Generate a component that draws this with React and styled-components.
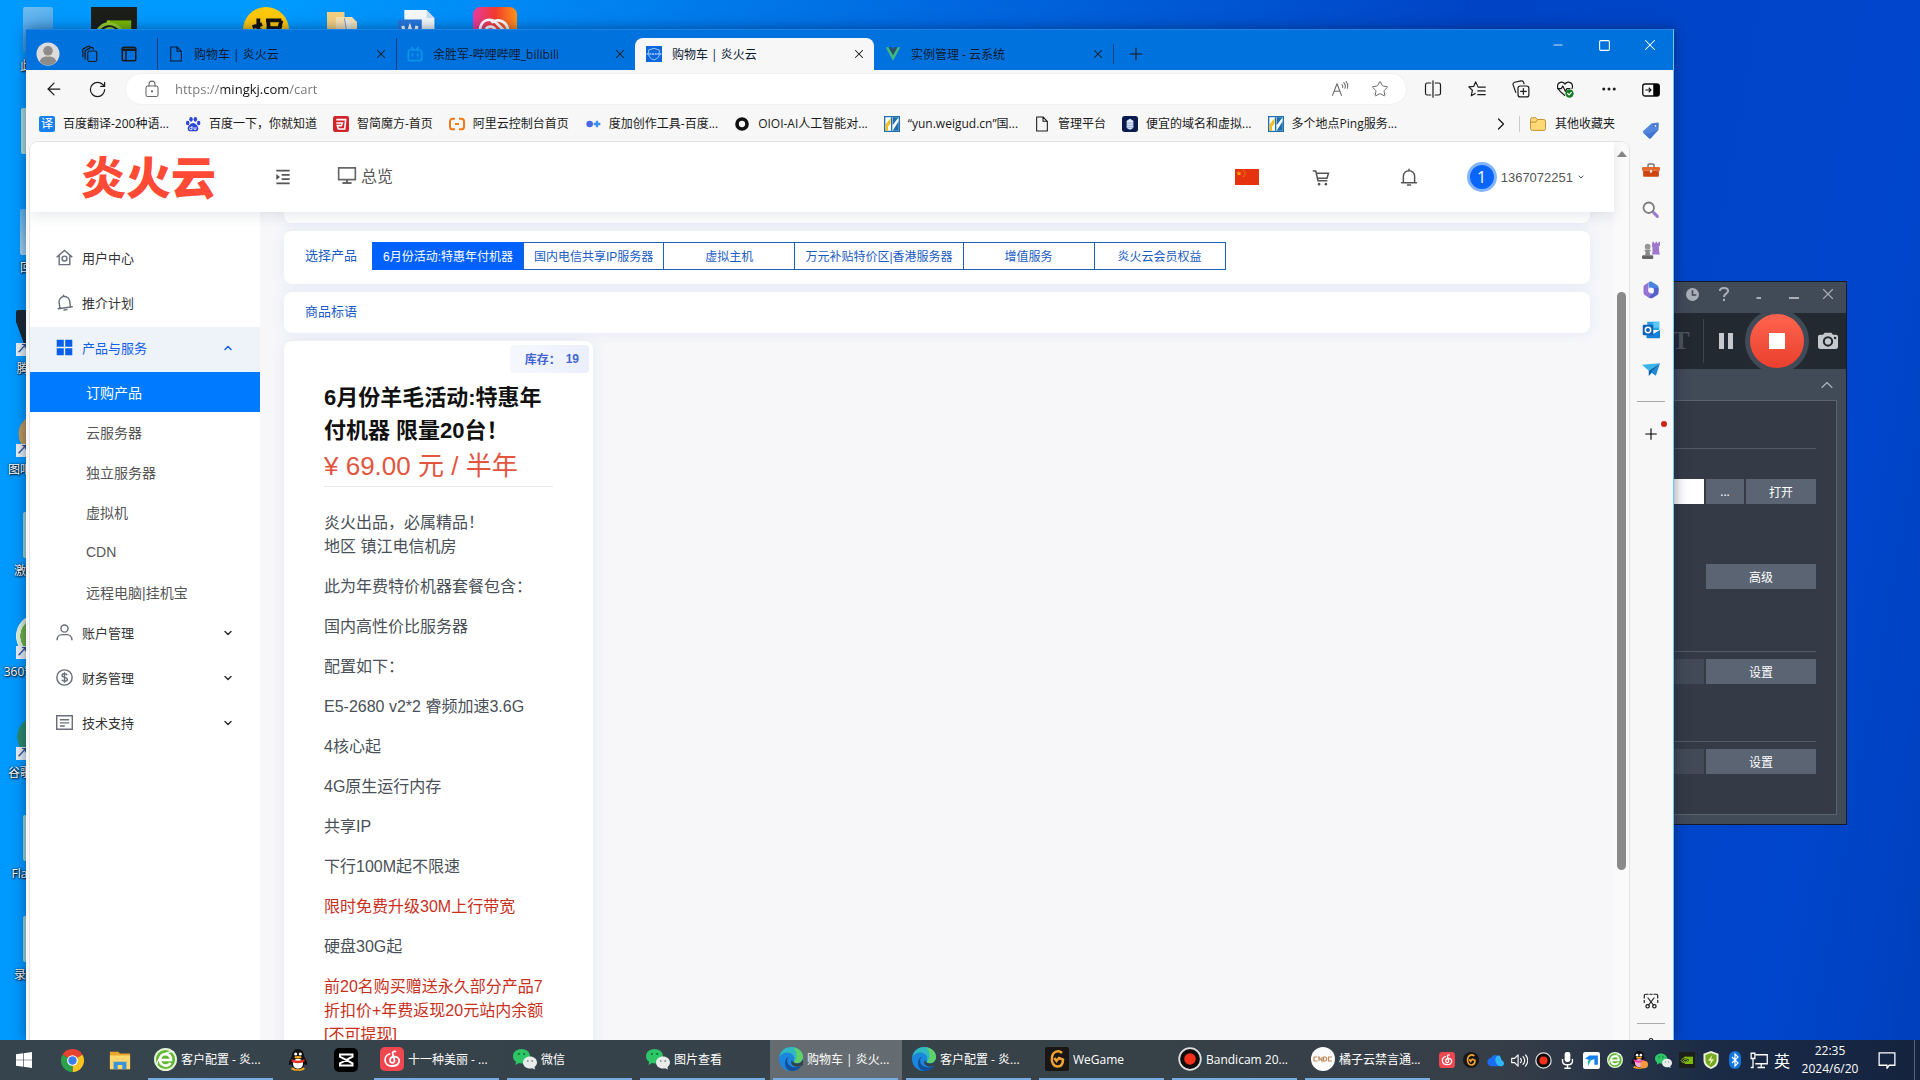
import React from "react";
import styled, { createGlobalStyle, css } from "styled-components";
import {
  ArrowLeft,
  RotateCw,
  Star,
  X,
  Plus,
  Minus,
  Square,
  Ellipsis,
  ChevronRight,
  ChevronUp,
  ChevronDown,
  Settings,
} from "lucide-react";

const uiFont = `"Open Sans", "Noto Sans CJK SC", sans-serif`;
const pageFont = `"Liberation Sans", "Noto Sans CJK SC", sans-serif`;

const GlobalStyle = createGlobalStyle`
  * {
    box-sizing: border-box;
  }
  body {
    margin: 0;
    font-family: ${uiFont};
    font-size: 12px;
  }
  button, input {
    font-family: inherit;
    font-size: inherit;
    color: inherit;
    border: 0;
    padding: 0;
    margin: 0;
    background: none;
  }
  button {
    cursor: pointer;
    display: inline-flex;
    align-items: center;
    justify-content: center;
  }
  a {
    color: inherit;
    text-decoration: none;
  }
  svg {
    display: block;
    flex: none;
  }
`;

/* ---------- icons ---------- */

const Svg = ({ size = 16, box = 24, children, ...rest }) => (
  <svg
    width={size}
    height={size}
    viewBox={`0 0 ${box} ${box}`}
    fill="none"
    aria-hidden="true"
    {...rest}
  >
    {children}
  </svg>
);

const Line = ({ width = 1.6, children, ...rest }) => (
  <Svg
    stroke="currentColor"
    strokeWidth={width}
    strokeLinecap="round"
    strokeLinejoin="round"
    {...rest}
  >
    {children}
  </Svg>
);

const DocIcon = () => (
  <Line size={16} width={1.6}>
    <path d="M4 1.500h9.500L20 8v14.500H4zM13.500 1.500V8H20" />
  </Line>
);

const ProfileIcon = () => (
  <Svg size={24}>
    <circle cx="12" cy="12" r="11.500" fill="#dcdcdc" />
    <circle cx="12" cy="8.800" r="4.800" fill="#8e8c8a" />
    <path d="M4 20c0-4 3-5.500 8-5.500s8 1.500 8 5.500a11.500 11.500 0 0 1-16 0z" fill="#8e8c8a" />
  </Svg>
);

const WorkspacesIcon = () => (
  <Line size={18}>
    <rect x="9" y="8" width="12" height="14" rx="2.500" />
    <path d="M5.500 18.500V7.500L13 3.500c2-1 3.500 0 3.500 2" />
    <path d="M2.500 15.500V5.500L9 2c1.500-.8 3 0 3 1" />
  </Line>
);

const TabActionsIcon = () => (
  <Line size={18} width={2}>
    <rect x="3" y="3" width="18" height="18" rx="2.500" />
    <path d="M3 5.500h18M3 7h18" />
    <path d="M8 7v14" />
  </Line>
);

const BiliIcon = () => (
  <Line size={16} width={2.6} stroke="#0a94ea">
    <rect x="2" y="6" width="20" height="16" rx="3" />
    <path d="M7 2l2.500 3.500M17 2l-2.500 3.500M8 12v3M16 12v3" />
  </Line>
);

const ShieldTabIcon = () => (
  <Svg>
    <path d="M0 0h24v24H0z" fill="#0d66dc" />
    <path d="M12 3.500l8 2.500v6c0 4.500-3 7-8 9-5-2-8-4.500-8-9V6z" stroke="#9cc8ff" strokeWidth="1.500" />
    <path d="M1 12h22" stroke="#7eb6ff" strokeWidth="3" strokeDasharray="3 1" />
  </Svg>
);

const VueIcon = () => (
  <Svg>
    <path d="M1 2h4.500L12 13.500 18.500 2H23L12 22z" fill="#3fb883" />
    <path d="M5.500 2H10l2 3.500L14 2h4.500L12 13.500z" fill="#2f4a5f" />
  </Svg>
);

const LockIcon = () => (
  <Line size={18} width={1.4}>
    <rect x="4" y="8" width="16" height="14" rx="2.500" />
    <path d="M8 8V5.500a4 4 0 0 1 8 0V8" />
    <circle cx="12" cy="15" r=".8" fill="currentColor" />
  </Line>
);

const ReadAloudIcon = () => (
  <Line size={18} width={1.4}>
    <path d="M2 20.500L8 5l6 15.500M4.200 15h7.600M14.500 6c1 1 1.500 2.500 1 4M17 3.500c2 2 2.500 5 1.500 7.500M20 2c2.200 2.500 2.800 6 1.800 9" />
  </Line>
);

const SplitIcon = () => (
  <Line size={18}>
    <path d="M9 4H4.500C3 4 2 5 2 6.500v11C2 19 3 20 4.500 20H9M15 4h4.500C21 4 22 5 22 6.500v11c0 1.500-1 2.500-2.500 2.500H15M12 1v22" />
  </Line>
);

const FavoritesIcon = () => (
  <Line size={18}>
    <path d="M13.500 9.500L10.300 2.500 7.500 8.600 1 9.200l4.800 4.500L4.400 21l5.200-3M14.500 9.500H23M13 14.500h10M13 19.500h10" />
  </Line>
);

const CollectionsIcon = () => (
  <Line size={18}>
    <rect x="8" y="8" width="14.500" height="14.500" rx="3" />
    <path d="M15.200 11.500v7.500M11.500 15.200h7.500M5 16.500L1.500 6.500C1 4.500 2 3.500 3.500 3L12 1.200c1.800-.4 3 .3 3.500 2L16 5" />
  </Line>
);

const HealthIcon = () => (
  <Line size={18}>
    <path d="M12 5.500C9.500 1.500 2 2 2 8.500c0 4.500 5 8 9.500 12M12 5.500c2.500-4 10-3.500 10 3 0 1-.3 2-.7 3M2 11.500h5l2-3.500 3.500 7 2-3.500h4" />
    <circle cx="18" cy="18" r="5.500" fill="#137a22" stroke="none" />
    <path d="M15.500 18l2 1.800 3-3.300" stroke="#fff" />
  </Line>
);

const PanelIcon = () => (
  <Svg size={18}>
    <rect x="1" y="4" width="22" height="16" rx="3" stroke="#111" strokeWidth="1.800" />
    <path d="M15 4h5a3 3 0 0 1 3 3v10a3 3 0 0 1-3 3h-5z" fill="#000" />
    <path d="M4.500 12h7M9 9l3 3-3 3" stroke="#111" strokeWidth="1.500" />
  </Svg>
);

const TranslateIcon = styled.span`
  display: flex;
  align-items: center;
  justify-content: center;
  width: 16px;
  height: 16px;
  border-radius: 2px;
  background: #1680ef;
  color: #fff;
  font-size: 12px;
  line-height: 16px;
`;

const PawIcon = () => (
  <Svg>
    <g fill="#2845d8">
      <ellipse cx="4" cy="10.500" rx="2.600" ry="3.400" />
      <ellipse cx="9" cy="5" rx="2.600" ry="3.500" />
      <ellipse cx="15.500" cy="5" rx="2.600" ry="3.500" />
      <ellipse cx="20.500" cy="10.500" rx="2.600" ry="3.400" />
      <path d="M12 10.500c3.500 0 8 5 8 8.500 0 2.500-2 4-4 4H8c-2 0-4-1.500-4-4 0-3.500 4.500-8.500 8-8.500z" />
    </g>
    <path d="M10.500 15v5.500H8.500a1.500 1.500 0 0 1 0-3.500h2M13.500 16.500V20h3v-3.500" stroke="#fff" strokeWidth="1.300" />
  </Svg>
);

const CubeIcon = () => (
  <Svg>
    <rect width="24" height="24" rx="3" fill="#d3232b" />
    <path d="M5 5.500h14L17.500 19.500H8M5 10.500h9L12.500 14.500H6.500L8 19.500" stroke="#fff" strokeWidth="2.400" />
  </Svg>
);

const AliyunIcon = () => (
  <Svg>
    <path d="M9 4H5.500A4 4 0 0 0 1.500 8v8a4 4 0 0 0 4 4H9M15 4h3.500a4 4 0 0 1 4 4v8a4 4 0 0 1-4 4H15M9 12h6" stroke="#f47a16" strokeWidth="3" />
  </Svg>
);

const DujiaIcon = () => (
  <Svg>
    <circle cx="7" cy="12" r="5" fill="#4868e6" />
    <path d="M18 7v10M13 12h10" stroke="#3f8ef2" strokeWidth="3.500" />
  </Svg>
);

const RingIcon = () => (
  <Svg>
    <circle cx="12" cy="12" r="7.500" stroke="#111" strokeWidth="5.500" />
  </Svg>
);

const PingIcon = () => (
  <Svg>
    <path d="M1 1h22v22H1z" fill="#fff" stroke="#1e6fae" strokeWidth="2" />
    <path d="M2 13L10 3v8l-4 5v6H2z" fill="#eebd28" />
    <path d="M13 14V2h9zM22 8v14h-9z" fill="#1e6fae" />
    <path d="M11.500 2v20" stroke="#1e6fae" strokeWidth="2" />
  </Svg>
);

const ServerIcon = () => (
  <Svg>
    <rect width="24" height="24" rx="4" fill="#0a1b50" />
    <path d="M7 7l5-3 5 3v11l-5 2.500L7 18z" fill="#dce8fa" />
    <path d="M7 10.500h10M7 14h10M7 17h10" stroke="#7d90be" />
  </Svg>
);

const FolderIcon = () => (
  <Svg size={18}>
    <path d="M2 6a2.500 2.500 0 0 1 2.500-2.500H9l2.500 2.500h8A2.500 2.500 0 0 1 22 8.500V18a2.500 2.500 0 0 1-2.500 2.500h-15A2.500 2.500 0 0 1 2 18z" fill="#ffd877" stroke="#b98a22" strokeWidth="1.200" />
    <path d="M2 9.500h7L11.500 6" stroke="#b98a22" strokeWidth="1.200" />
  </Svg>
);

const TagIcon = () => (
  <Svg size={18}>
    <path d="M13 3l8-1a1.500 1.500 0 0 1 1.500 1.500l-.5 8L12 22.500a2 2 0 0 1-3 0L2 16a2 2 0 0 1 0-3z" fill="#5286dd" />
    <path d="M2 16l7 6.500a2 2 0 0 0 3 0L22 11.500 9 17z" fill="#4474d0" />
    <circle cx="18" cy="6.500" r="2" fill="#dfeaff" stroke="#2c4f9c" />
  </Svg>
);

const ToolboxIcon = () => (
  <Svg size={18}>
    <path d="M8 8V5.500A1.500 1.500 0 0 1 9.500 4h5A1.500 1.500 0 0 1 16 5.500V8" stroke="#777" strokeWidth="2" />
    <path d="M0 9.500A1.500 1.500 0 0 1 1.500 8h21A1.500 1.500 0 0 1 24 9.500V13H0z" fill="#e3672f" />
    <path d="M1.500 13h21v6.500A1.500 1.500 0 0 1 21 21H3a1.500 1.500 0 0 1-1.500-1.500z" fill="#cc4412" />
    <rect x="10.500" y="11.500" width="3" height="4" rx="1" fill="#ffe0cf" />
  </Svg>
);

const SearchIcon = () => (
  <Svg size={18}>
    <path d="M15.500 15.500l5 5" stroke="#9a79cf" strokeWidth="4" strokeLinecap="round" />
    <circle cx="9" cy="9" r="7" stroke="#7d7d7d" strokeWidth="2.400" fill="#fafafa" />
  </Svg>
);

const ChessIcon = () => (
  <Svg size={18}>
    <path d="M14 1h2v2h2V1h2v2h2V1h2v5l-1.500 1 .5 8 1 3H13l1-3V8l-1-1z" fill="#9c78cc" />
    <circle cx="7.500" cy="7.500" r="3.800" fill="#979797" />
    <path d="M3.500 11.500h8v2l-1.500.5 1 5H4l1-5-1.500-.5z" fill="#8a8a8a" />
    <rect x="0" y="19" width="15" height="5" rx="1.500" fill="#666" />
  </Svg>
);

const OfficeIcon = () => (
  <Svg size={18}>
    <path d="M9 1.500c1.500-1 3-1 4.500-.2l6.500 4c1.500 1 2 2 2 3.700v5L15 9.500 9 8.500z" fill="#4a86e0" />
    <path d="M22 9v6.500c0 1.500-.8 2.700-2 3.500l-6 3.500c-1.500.8-3 .8-4.500-.2L7 20.500l8.500-5V9.500z" fill="#5361cc" />
    <path d="M9 1.500L4 5C2.500 6 2 7 2 8.500V15c0 2 .8 3 2 4l5.500 3.300 4-6.800-5-2.500V6z" fill="#9373d6" />
    <path d="M12 8.500l3.500 2v4L12 16.500l-3.500-2v-4z" fill="#f7f7f7" />
  </Svg>
);

const OutlookIcon = () => (
  <Svg size={18}>
    <path d="M7 1h16v11H7z" fill="#2aa3e8" />
    <path d="M15 1h8v8h-8z" fill="#58c8f5" />
    <path d="M6 12l9.500 5L24 12v10a1 1 0 0 1-1 1H7a1 1 0 0 1-1-1z" fill="#1580d8" />
    <rect x="1" y="5" width="14" height="14" rx="1.500" fill="#0b62b5" />
    <circle cx="8" cy="12" r="3.600" stroke="#fff" strokeWidth="2" />
  </Svg>
);

const PlaneIcon = () => (
  <Svg size={18}>
    <path d="M0 5l24-2L9 13z" fill="#38b4ec" />
    <path d="M24 3L9 13v7l4-4.500z" fill="#0d5ea8" />
    <path d="M24 3L18.500 19.500 11.500 15z" fill="#1f8ad8" />
  </Svg>
);

const ShotIcon = () => (
  <Line size={18}>
    <path d="M3 8V5a2 2 0 0 1 2-2h3M10.500 3h3M16 3h3a2 2 0 0 1 2 2v3M3 11v3M21 11v3M8 8l7 9M16 8l-7 9" />
    <circle cx="7.500" cy="19" r="2.300" />
    <circle cx="16.500" cy="19" r="2.300" />
  </Line>
);

const MenuFoldIcon = () => (
  <Svg size={16}>
    <path d="M2 2.500h20M10 8.800h12M10 15.200h12M2 21.500h20" stroke="#555" strokeWidth="2.800" />
    <path d="M2 7.500v9l5.500-4.500z" fill="#555" />
  </Svg>
);

const MonitorIcon = () => (
  <Svg size={20}>
    <path d="M2 3.500h20v14H2z" stroke="#666" strokeWidth="2" />
    <path d="M12 17.500V21M6.500 21.500h11" stroke="#666" strokeWidth="2.400" />
  </Svg>
);

const FlagIcon = () => (
  <svg width="24" height="16" viewBox="0 0 24 16" aria-hidden="true">
    <path d="M0 0h24v16H0z" fill="#e5320f" />
    <path d="M4 2l.7 1.600 1.800.1-1.400 1.200.5 1.700L4 5.700 2.400 6.600l.5-1.700L1.500 3.700l1.800-.1z" fill="#fca712" />
    <g fill="#f58a14">
      <circle cx="8.500" cy="1.800" r=".7" />
      <circle cx="10" cy="3.500" r=".7" />
      <circle cx="10" cy="5.700" r=".7" />
      <circle cx="8.500" cy="7.200" r=".7" />
    </g>
  </svg>
);

const CartIcon = () => (
  <Svg size={18}>
    <path d="M1 4h4l3 13h12.500M5.500 7H22l-2 6.500H7.300" stroke="#555" strokeWidth="2" />
    <circle cx="9.500" cy="21.500" r="1.700" fill="#555" />
    <circle cx="18.500" cy="21.500" r="1.700" fill="#555" />
  </Svg>
);

const BellIcon = ({ tilt, size = 18 }) => (
  <Svg size={size} stroke="currentColor" strokeWidth="2">
    <g transform={tilt ? "rotate(-8 12 12)" : undefined}>
      <path d="M2 19.500h20M4.500 19V11a7.500 7.500 0 0 1 15 0v8M12 1.500v2M10 22.500h4" strokeLinecap="round" />
    </g>
  </Svg>
);

const HomeIcon = () => (
  <Svg size={17} stroke="currentColor" strokeWidth="2">
    <path d="M1 11.500L12 2l11 9.500M4.500 9v13h15V9" />
    <circle cx="12" cy="13.500" r="3.500" />
  </Svg>
);

const GridIcon = () => (
  <Svg size={17}>
    <path d="M1 1h10v10H1zM13 1h10v10H13zM1 13h10v10H1zM13 13h10v10H13z" fill="currentColor" />
  </Svg>
);

const UserIcon = () => (
  <Svg size={17} stroke="currentColor" strokeWidth="2">
    <circle cx="12" cy="6.500" r="5" />
    <path d="M1.500 23c0-5.500 3.500-8 7-8h7c3.500 0 7 2.500 7 8" />
  </Svg>
);

const MoneyIcon = () => (
  <Svg size={17} stroke="currentColor" strokeWidth="2">
    <circle cx="12" cy="12" r="10.800" />
    <path d="M16 8.500c-1-1.500-2.500-1.700-4-1.700-2 0-3.500.8-3.500 2.500 0 3.500 7.500 1.800 7.500 5.200 0 1.800-1.700 2.700-4 2.700-1.700 0-3.200-.5-4-2M12 4.500v15" />
  </Svg>
);

const NewsIcon = () => (
  <Svg size={17} stroke="currentColor" strokeWidth="2">
    <path d="M1 2.500h22v19H1z" />
    <path d="M5.500 8h13M5.500 12.500h13M5.500 17h7" />
  </Svg>
);

/* ---------- app logos ---------- */

const WindowsLogo = () => (
  <Svg size={16}>
    <path d="M0 3.500l10.500-1.500v9.500H0zM11.500 1.800L24 0v11.500H11.500zM0 12.500h10.500V22L0 20.500zM11.500 12.500H24V24l-12.500-1.800z" fill="#fff" />
  </Svg>
);

const ChromeLogo = ({ size = 23 }) => (
  <Svg size={size}>
    <path d="M12 12L1.600 6A12 12 0 0 1 22.400 6z" fill="#e5432f" />
    <path d="M12 12l10.400-6A12 12 0 0 1 12 24z" fill="#f9c31f" />
    <path d="M12 12v12A12 12 0 0 1 1.600 6z" fill="#2da04c" />
    <circle cx="12" cy="12" r="5.600" fill="#fff" />
    <circle cx="12" cy="12" r="4.400" fill="#3b7ded" />
  </Svg>
);

const ExplorerLogo = () => (
  <Svg size={22}>
    <path d="M1 3h9l2 2h11v17H1z" fill="#e9a62a" />
    <path d="M1 7h22v15H1z" fill="#fcd66f" />
    <path d="M5 22v-8h14v8h-4.500v-4.500h-5V22z" fill="#3b93d8" />
  </Svg>
);

const Browser360Logo = ({ size = 23 }) => (
  <Svg size={size}>
    <circle cx="12" cy="12" r="11" fill="#62b834" stroke="#e6f5d8" strokeWidth="2" />
    <path d="M6.500 12.500h11.200c0-4-2.400-6.200-5.700-6.200s-5.800 2.500-5.800 6 2.500 6 5.800 6c2.500 0 4.200-1 5.200-2.800" stroke="#fff" strokeWidth="2.800" />
    <path d="M3 17C4 10 12 3 21 4" stroke="#fff" strokeWidth="1.300" />
  </Svg>
);

const QQLogo = ({ pink, size = 22 }) => (
  <Svg size={size}>
    <ellipse cx="12" cy="21.500" rx="7.500" ry="2.300" fill="#f5a51b" />
    <path d="M12 0c4.500 0 6.500 3.500 6.500 7.500 1.500 3 3.500 6 3.500 8.500s-1.500 1.500-2.500 0C18.500 20 15.500 22 12 22s-6.500-2-7.500-6c-1 1.500-2.500 2.500-2.500 0s2-5.500 3.500-8.500C5.500 3.500 7.500 0 12 0z" fill="#111" />
    <ellipse cx="12" cy="16" rx="5.500" ry="5.500" fill={pink ? "#f7a8d8" : "#fff"} />
    <path d="M5 11c4 2.500 10 2.500 14 0v3c-4 2-10 2-14 0z" fill={pink ? "#e83aa6" : "#e02a20"} />
    <circle cx="9.500" cy="5.500" r="1.700" fill="#fff" />
    <circle cx="14.500" cy="5.500" r="1.700" fill="#fff" />
    <ellipse cx="12" cy="9" rx="4" ry="1.300" fill="#f5a51b" />
    {pink && <circle cx="19" cy="18" r="5" fill="#f79a3d" />}
  </Svg>
);

const CapcutLogo = () => (
  <Svg size={24}>
    <rect width="24" height="24" rx="5" fill="#000" />
    <path d="M18.500 8.500V6.500H6v2.200l12.500 6.600v2.200H6v-2.200l12.500-6.600z" stroke="#fff" strokeWidth="2" />
  </Svg>
);

const NeteaseLogo = ({ size = 24 }) => (
  <Svg size={size}>
    <rect width="24" height="24" rx="5" fill="#ee4750" />
    <path d="M15.500 4.500c-2-.5-3.200.8-2.800 2.500l1.800 6.500c.5 3-4.500 3.200-4.500 0 0-2.500 2-3.800 4.500-3.800 7 .3 6 9.300-2.500 9.300-8.500 0-9-10-2.500-12" stroke="#fff" strokeWidth="1.800" strokeLinecap="round" />
  </Svg>
);

const WechatLogo = ({ size = 24 }) => (
  <Svg size={size}>
    <path d="M8.500 2C4 2 0 5 0 9.200c0 2.300 1.200 4.200 3 5.500L2.500 18l3.500-2c5 1.500 11-1.500 11-6.800C17 5 13 2 8.500 2z" fill="#2dc566" />
    <circle cx="5.800" cy="7" r="1" fill="#0c6b31" />
    <circle cx="11.200" cy="7" r="1" fill="#0c6b31" />
    <path d="M17 9.500c-4 0-7 2.600-7 6s3 6 7 6c.8 0 1.500-.1 2.200-.3L22 22.500l-.5-2.500c1.600-1.100 2.500-2.700 2.500-4.500 0-3.400-3-6-7-6z" fill="#e8ecea" />
    <circle cx="14.800" cy="14" r=".9" fill="#88908c" />
    <circle cx="19.200" cy="14" r=".9" fill="#88908c" />
  </Svg>
);

const EdgeLogo = () => (
  <Svg size={24}>
    <circle cx="12" cy="12" r="12" fill="#1b87dc" />
    <path d="M.3 10C1.500 4 6 0 12 0c7 0 12 4.500 12 10 0 4-3 6-6 6-2.500 0-3.500-1-3-2.500C16.500 9.500 13 5.500 8.500 5.500 5 5.500 2 7 .3 10z" fill="#30b9c0" />
    <path d="M14 .2C20 1 24 5 24 10c0 4-3 6-6 6-1.500 0-2.600-.4-3-1 4-4 3-11-1-14.800z" fill="#5fd06a" />
    <path d="M10.500 9.500c-3 2-3 6-.5 8.500 3.500 3.500 9 2.500 12.500.5-2.500 4-6 5.500-9.500 5.500-4 0-7.500-4-7-8.500.3-3 2-5.500 4.500-6z" fill="#12509e" />
    <path d="M24 12v6.500l-1.500 0c-3 1.700-7 1.500-9-.5-2-1.700-1.500-3.500-.5-5 .5 2.500 2.500 3.500 5 3.500s4.800-1.500 6-4.500z" fill="#374148" />
  </Svg>
);

const WegameLogo = ({ size = 24, round }) => (
  <Svg size={size}>
    <rect width="24" height="24" rx={round ? 12 : 2} fill="#191716" />
    <path d="M17 6c-3-3-9-2-10 4-1 6 2 9.500 5.500 9.500S18 17 18 12.500l-4-1.500-2.500 3L9.500 11" stroke="#f2a233" strokeWidth="2.500" />
  </Svg>
);

const RecordLogo = ({ size = 24 }) => (
  <Svg size={size}>
    <circle cx="12" cy="12" r="10.800" fill="#110d0d" stroke="#dedede" strokeWidth="1.800" />
    <circle cx="12" cy="12" r="5.800" fill="#f2301c" />
  </Svg>
);

const CndcLogo = () => (
  <Svg size={24}>
    <circle cx="12" cy="12" r="12" fill="#fbfbfb" />
    <path d="M6.500 10H3v4h3.500M8 14v-4l3 4v-4M12.500 10h2l1 1v2l-1 1h-2zM21 10h-3.500v4H21" stroke="#c38a5c" strokeWidth="1.200" />
  </Svg>
);

const DriveLogo = () => (
  <Svg size={17}>
    <path d="M7 20a6 6 0 0 1-1-12c1-4 8-5.500 10-.5 2 4 8 4 8 9a4 4 0 0 1-4 3.500z" fill="#1a6df0" />
    <path d="M12 13c-1-5 2-9 5-8 3 1 2 5 4 7 2 1 3 3 3 4.500A4 4 0 0 1 20 20c-5 0-7-3-8-7z" fill="#2cb8f4" />
  </Svg>
);

const SpeakerIcon = () => (
  <Line size={17} stroke="#fff">
    <path d="M1 9h4l5-5v16l-5-5H1zM13.500 9c1.500 2 1.500 4 0 6M17 6.500c3 3.500 3 7.500 0 11M20.500 4c4 5 4 11 0 16" />
  </Line>
);

const MicIcon = () => (
  <Svg size={17}>
    <rect x="8" y="0" width="8" height="14" rx="3" fill="#fff" />
    <path d="M5 10v3c0 3 2.500 5 7 5s7-2 7-5v-3M12 18v4M7.500 23h9" stroke="#fff" strokeWidth="2" />
  </Svg>
);

const TodeskLogo = () => (
  <Svg size={17}>
    <rect width="24" height="24" rx="3" fill="#fff" />
    <path d="M3 9l6-4h12v13h-5v-8l-5 2z" fill="#1580f0" />
    <path d="M7 20V12l5-2z" fill="#18b3a6" />
  </Svg>
);

const NvidiaLogo = ({ size = 17 }) => (
  <Svg size={size}>
    <path d="M0 0h24v24H0z" fill="#1b1e19" />
    <path d="M9 7h12v11H9z" fill="#77b900" />
    <path d="M3 13c3-5 8-6 13-1-3 5-9 6-13 1zM9 7v2M6.500 13c2-2.500 4.500-2.500 6.500 0-2 2-4.500 2-6.500 0z" stroke="#9ad32a" strokeWidth="1.500" fill="#1b1e19" />
  </Svg>
);

const GuardLogo = () => (
  <Svg size={18}>
    <path d="M12 0l10 3.500V12c0 6-4 10-10 12C6 22 2 18 2 12V3.500z" fill="#eef2df" />
    <path d="M12 2.500l7.500 2.700V12c0 4.500-3 7.500-7.500 9.500C7.500 19.500 4.500 16.500 4.500 12V5.200z" fill="#76a922" />
    <path d="M14 5l-6 8h4l-2 6 6-8h-4z" fill="#f3f6b5" />
  </Svg>
);

const BluetoothLogo = () => (
  <Svg size={18}>
    <rect x="4" y="0" width="16" height="24" rx="8" fill="#1076dd" />
    <path d="M8 8l8 8-4 4V4l4 4-8 8" stroke="#fff" strokeWidth="1.600" />
  </Svg>
);

const NetworkIcon = () => (
  <Svg size={18} stroke="#fff" strokeWidth="1.700">
    <path d="M7 5h16v12H7M15 17v4.500M10 22h10M4 10v12H1" />
    <path d="M1.500 3h5v7h-5z" />
  </Svg>
);

const NoticeIcon = () => (
  <Svg size={18} stroke="#fff" strokeWidth="1.700">
    <path d="M1.500 2.500h21V19H15l-3 4v-4H1.500z" />
  </Svg>
);

/* ---------- desktop ---------- */

const Desktop = styled.div`
  display: flex;
  flex-direction: column;
  height: 100vh;
  overflow: hidden;
  background: linear-gradient(100deg, #0099fe 0%, #0099fe 14%, #0068e0 45%, #0044c6 70%, #0046cc 92%, #003fbd 100%);
`;

const Workspace = styled.main`
  position: relative;
  flex: 1;
  min-height: 0;
  overflow: hidden;
`;

const ShortcutColumn = styled.div`
  display: flex;
  flex-direction: column;
  gap: 1px;
  width: 76px;
`;

const Shortcut = styled.button`
  && {
    display: flex;
  }
  position: relative;
  flex-direction: column;
  justify-content: flex-start;
  gap: 4px;
  height: 100px;
  padding-top: 7px;
  color: #fff;
  line-height: 18px;
  text-shadow: 1px 1px 2px #000, 0 0 2px #000;
  white-space: nowrap;
`;

const ShortcutArt = styled.span`
  position: relative;
  display: block;
  width: ${(p) => p.$width || 44}px;
  height: 46px;
  border-radius: 2px;
  background: ${(p) => p.$paint};

  ${(p) =>
    p.$linked &&
    css`
      &::after {
        content: "↗";
        position: absolute;
        left: 0;
        bottom: 0;
        width: 13px;
        height: 13px;
        background: #e8eef4;
        color: #1b4f91;
        font-size: 12px;
        font-weight: bold;
        line-height: 12px;
        text-shadow: none;
      }
    `}
`;

const ShortcutRow = styled.div`
  position: absolute;
  top: 7px;
  left: 91px;
  display: flex;
  align-items: flex-start;
`;

const RowIcon = styled.div`
  width: ${(p) => p.$cell}px;
  padding-top: ${(p) => p.$top || 0}px;
`;

/* ---------- browser ---------- */

const BrowserWindow = styled.section`
  position: absolute;
  top: 29px;
  left: 26px;
  right: 246px;
  bottom: 0;
  display: flex;
  flex-direction: column;
  background: #f7f7f7;
  box-shadow: 0 0 12px rgba(0, 20, 60, 0.5);
  border-right: 1px solid #6fc6ee;
`;

const TabStrip = styled.header`
  display: flex;
  align-items: flex-end;
  height: 41px;
  padding-left: 10px;
  background: #0072dd;
  border-top: 1px solid #1d84e4;
`;

const StripTools = styled.div`
  display: flex;
  align-items: center;
  gap: 21px;
  height: 32px;
  width: 121px;
`;

const Tab = styled.div`
  display: flex;
  align-items: center;
  gap: 10px;
  width: 239px;
  height: 32px;
  padding: 0 8px 0 10px;
  border-left: 1px solid ${(p) => (p.$divided ? "#0b3f7c" : "transparent")};
  border-radius: ${(p) => (p.$active ? "8px 8px 0 0" : "0")};
  background: ${(p) => (p.$active ? "#f7f7f7" : "transparent")};
  color: #0b1a33;
`;

const TabTitle = styled.span`
  flex: 1;
  white-space: nowrap;
`;

const IconButton = styled.button`
  flex: none;
  width: ${(p) => p.$width || 18}px;
  height: ${(p) => p.$height || 18}px;
  color: ${(p) => p.$color || "#1b1b1b"};
`;

const NewTab = styled.div`
  display: flex;
  align-items: center;
  gap: 13px;
  height: 32px;
  flex: 1;
`;

const TabRule = styled.i`
  width: 1px;
  height: 20px;
  background: #0b3f7c;
`;

const WindowButtons = styled.div`
  display: flex;
  align-self: flex-start;
`;

const BrowserBody = styled.div`
  display: flex;
  flex: 1;
  min-height: 0;
`;

const BrowserMain = styled.div`
  display: flex;
  flex-direction: column;
  flex: 1;
  min-width: 0;
`;

const Toolbar = styled.div`
  display: flex;
  align-items: center;
  height: 38px;
  padding: 0 12px 0 18px;
`;

const HistoryButtons = styled.div`
  display: flex;
  gap: 24px;
  width: 63px;
`;

const AddressBar = styled.form`
  display: flex;
  align-items: center;
  flex: 1;
  gap: 14px;
  height: 30px;
  margin: 0 18px 0 19px;
  padding: 0 9px 0 17px;
  border-radius: 15px;
  background: #fff;
  color: #666;
  box-shadow: 0 0 2px rgba(0, 0, 0, 0.08);
`;

const AddressInput = styled.input`
  flex: 1;
  min-width: 0;
  outline: none;
  font-size: 13px;
  line-height: 20px;
  color: transparent;
  background: linear-gradient(90deg, #767676 46px, #111 46px, #111 114px, #767676 114px);
  background-clip: text;
`;

const ToolbarActions = styled.div`
  display: flex;
  align-items: center;
  gap: 26px;
`;

const Bookmarks = styled.nav`
  display: flex;
  align-items: center;
  gap: 16px;
  height: 33px;
  padding: 0 15px 1px 13px;
`;

const Bookmark = styled.a`
  display: flex;
  align-items: center;
  gap: 8px;
  color: #1a1a1a;
  white-space: nowrap;
  line-height: 18px;
`;

const OtherBookmarks = styled.div`
  display: flex;
  align-items: center;
  gap: 9px;
  margin-left: auto;
`;

const Separator = styled.i`
  width: 1px;
  height: 16px;
  background: #ccc;
`;

const EdgeRail = styled.aside`
  display: flex;
  flex-direction: column;
  align-items: center;
  gap: 22px;
  width: 43px;
  padding: 11px 2px 0 0;
  overflow: hidden;
`;

const RailRule = styled.i`
  flex: none;
  width: 28px;
  height: 1px;
  background: #aaa;
`;

const AddApp = styled.button`
  position: relative;
  flex: none;
  width: 28px;
  height: 20px;
`;

const RedDot = styled.i`
  position: absolute;
  top: -3px;
  right: -2px;
  width: 6px;
  height: 6px;
  border-radius: 50%;
  background: #cc2418;
`;

const RailBottom = styled.div`
  display: flex;
  flex-direction: column;
  align-items: center;
  gap: 13px;
  height: 48px;
  margin-top: auto;
`;

/* ---------- site ---------- */

const PageFrame = styled.div`
  display: flex;
  flex: 1;
  min-height: 0;
  margin-left: 3px;
  border: 1px solid #e2e2e4;
  border-bottom: 0;
  border-radius: 9px 9px 0 0;
  overflow: hidden;
  background: #fff;
`;

const Site = styled.div`
  display: flex;
  flex-direction: column;
  flex: 1;
  min-width: 0;
  font-family: ${pageFont};
  background: #f7f7fa;
`;

const ScrollTrack = styled.div`
  display: flex;
  flex-direction: column;
  align-items: center;
  width: 15px;
  padding-top: 9px;
  background: #fafafa;
`;

const ScrollArrow = styled.i`
  border: 5px solid transparent;
  border-top: 0;
  border-bottom: 6px solid #868686;
`;

const ScrollThumb = styled.i`
  width: 9px;
  height: 65%;
  margin-top: 135px;
  border-radius: 5px;
  background: #8a8a8a;
`;

const SiteHeader = styled.header`
  position: relative;
  display: flex;
  align-items: center;
  height: 70px;
  padding: 0 29px 0 51px;
  background: #fff;
  color: #555;
  box-shadow: 0 4px 12px rgba(60, 70, 100, 0.12);
`;

const Logo = styled.a`
  width: 194px;
  padding-top: 6px;
  color: #ff4a36;
  font-size: 45px;
  font-weight: 900;
  line-height: 60px;
  white-space: nowrap;
`;

const Overview = styled.a`
  display: flex;
  align-items: center;
  gap: 4px;
  margin-left: 46px;
  padding-bottom: 4px;
  font-size: 16px;
`;

const HeaderTools = styled.div`
  display: flex;
  align-items: center;
  margin-left: auto;
`;

const HeaderButton = styled.button`
  width: ${(p) => p.$width || 88}px;
  height: 36px;
  color: #555;
`;

const Account = styled.button`
  gap: 4px;
  margin-left: 14px;
  font-size: 13px;
`;

const Avatar = styled.span`
  display: flex;
  align-items: center;
  justify-content: center;
  width: 30px;
  height: 30px;
  border: 3px solid #84b4fb;
  border-radius: 50%;
  background: #0a66fb;
  color: #fff;
  font-family: ${uiFont};
  font-size: 16px;
`;

const SiteBody = styled.div`
  display: flex;
  flex: 1;
  min-height: 0;
`;

const SideNav = styled.nav`
  flex: none;
  width: 230px;
  padding-top: 25px;
  background: #fff;
`;

const NavItem = styled.a`
  display: flex;
  align-items: center;
  gap: 9px;
  height: 45px;
  padding: 0 26px 4px;
  font-size: 13px;
  color: ${(p) => (p.$open ? "#1060e8" : "#333")};
  background: ${(p) => (p.$open ? "#eef2f9" : "transparent")};

  > svg:first-child {
    color: ${(p) => (p.$open ? "#0a5fe8" : "#6b6d7c")};
  }
`;

const NavLabel = styled.span`
  flex: 1;
`;

const SubItem = styled.a`
  display: flex;
  align-items: center;
  height: 40px;
  padding: 0 0 1px 56px;
  font-size: 14px;
  color: ${(p) => (p.$active ? "#fff" : "#555")};
  background: ${(p) => (p.$active ? "#007aff" : "transparent")};
`;

const Content = styled.div`
  display: flex;
  flex-direction: column;
  flex: 1;
  min-width: 0;
  gap: 8px;
  padding: 0 24px;
`;

const Card = styled.section`
  display: flex;
  flex: none;
  gap: 16px;
  min-height: 41px;
  padding: 11px 21px 14px;
  border-radius: 8px;
  background: #fff;
  color: #1b5cc4;
  font-size: 13px;
  line-height: 28px;
  box-shadow: 0 0 14px rgba(60, 90, 190, 0.09);
`;

const CardTail = styled(Card)`
  min-height: 0;
  height: 11px;
  padding: 0;
  border-radius: 0 0 8px 8px;
`;

const Slogan = styled(Card)`
  padding: 6px 21px;
`;

const GroupPicker = styled.div`
  display: flex;
`;

const GroupButton = styled.button`
  min-width: 132px;
  height: 28px;
  padding: 0 10px 2px;
  margin-left: -1px;
  border: 1px solid #1a63b4;
  font-size: 12px;
  white-space: nowrap;

  ${(p) =>
    p.$active &&
    css`
      border-color: #0061ff;
      background: #0061ff;
      color: #fff;
    `}
`;

const ProductCard = styled.article`
  position: relative;
  flex: none;
  width: 309px;
  padding: 40px 40px 24px;
  border-radius: 8px;
  background: #fff;
  box-shadow: 0 0 14px rgba(60, 80, 140, 0.09);
`;

const Stock = styled.span`
  position: absolute;
  top: 4px;
  right: 4px;
  display: flex;
  align-items: center;
  gap: 5px;
  height: 28px;
  padding: 0 10px 1px 15px;
  border-radius: 4px;
  background: linear-gradient(90deg, #f6f8fe, #eaeffb);
  color: #4466d0;
  font-size: 12px;
  font-weight: bold;
`;

const ProductTitle = styled.h2`
  margin: 0;
  color: #111;
  font-size: 22px;
  line-height: 33px;
`;

const Price = styled.p`
  margin: 0;
  height: 40px;
  border-bottom: 1px solid #e6e8ea;
  color: #e2553f;
  font-size: 26px;
  line-height: 38px;
  white-space: nowrap;
`;

const Details = styled.div`
  padding-top: 24px;
  color: #495057;
  font-size: 16px;
  line-height: 24px;
`;

const Detail = styled.p`
  margin: 0 0 16px;
  color: ${(p) => (p.$hot ? "#c9301c" : "inherit")};
`;

/* ---------- recorder ---------- */

const Recorder = styled.section`
  position: absolute;
  top: 281px;
  right: 73px;
  width: 260px;
  padding-bottom: 9px;
  border: 1px solid #131a26;
  background: #414a57;
  color: #fff;
`;

const RecorderTitle = styled.header`
  display: flex;
  align-items: center;
  justify-content: flex-end;
  gap: 14px;
  height: 31px;
  padding: 0 7px 7px 0;
  color: #a9afb7;
`;

const RecorderBar = styled.div`
  display: flex;
  align-items: center;
  justify-content: flex-end;
  height: 56px;
  padding-right: 8px;
  background: #222930;
`;

const TextTool = styled.button`
  width: 26px;
  height: 44px;
  color: #4b535d;
  font-family: "Liberation Serif", serif;
  font-size: 26px;
  font-weight: bold;
`;

const BarRule = styled.i`
  width: 1px;
  height: 44px;
  margin-left: 9px;
  background: #3d454f;
`;

const PauseButton = styled.button`
  width: 14px;
  height: 16px;
  margin: 0 12px 0 15px;
  border: solid #c5c9ce;
  border-width: 0 5px;
`;

const StopButton = styled.button`
  flex: none;
  width: 64px;
  height: 64px;
  border: 5px solid #414a57;
  border-radius: 50%;
  background: linear-gradient(#ff6450, #e9402c);

  &::after {
    content: "";
    width: 16px;
    height: 16px;
    background: #fff;
  }
`;

const CameraButton = styled.button`
  margin-left: 9px;
`;

const Collapse = styled.div`
  display: flex;
  align-items: center;
  justify-content: flex-end;
  height: 31px;
  padding-right: 9px;
  color: #b0b6be;
`;

const RecorderPanel = styled.div`
  margin-right: 9px;
  height: 415px;
  padding: 47px 20px 0 0;
  border: 1px solid #5a636e;
  background: #343b46;
`;

const PanelSection = styled.div`
  height: ${(p) => p.$height}px;
  border-top: ${(p) => (p.$ruled ? "1px solid #535b66" : "0")};
  padding-top: ${(p) => p.$top}px;
`;

const PanelRow = styled.div`
  display: flex;
  justify-content: flex-end;
  gap: 2px;
`;

const PanelButton = styled.button`
  width: ${(p) => p.$width}px;
  height: 25px;
  background: ${(p) => (p.$dim ? "#414a56" : "#5a6473")};
`;

const PathInput = styled.input`
  width: 90px;
  height: 25px;
  background: #fff;
`;

/* ---------- taskbar ---------- */

const Taskbar = styled.footer`
  display: flex;
  flex: none;
  height: 40px;
  background: linear-gradient(90deg, #36444d 0%, #374148 60%, #363e48 78%, #1a2a45 90%, #15233f 100%);
  color: #fff;
`;

const PinnedButton = styled.button`
  flex: none;
  width: 48px;
  height: 40px;
`;

const TaskList = styled.div`
  display: flex;
  gap: 8px;
  margin: 0 1px 0 4px;
`;

const TaskButton = styled.button`
  && {
    justify-content: flex-start;
  }
  flex: none;
  gap: 4px;
  width: 125px;
  height: 40px;
  padding-left: 6px;
  border-bottom: 2px solid #76aee4;
  background: ${(p) => (p.$active ? "#646c71" : "transparent")};
  box-shadow: ${(p) => (p.$active ? "-3px 0 #646c71, 4px 0 #646c71" : "none")};
  white-space: nowrap;
  overflow: visible;
`;

const Tray = styled.div`
  display: flex;
  align-items: center;
  margin-left: auto;
`;

const TrayButton = styled.button`
  width: 24px;
  height: 40px;
`;

const InputMode = styled(TrayButton)`
  font-size: 16px;
  width: 22px;
`;

const Clock = styled.button`
  && {
    flex-direction: column;
  }
  width: 74px;
  line-height: 18px;
  font-size: 12px;
`;

const Notice = styled.button`
  width: 40px;
  height: 40px;
`;

const ShowDesktop = styled.button`
  width: 6px;
  height: 40px;
  margin-left: 7px;
  border-left: 1px solid #56627a;
`;

/* ---------- data ---------- */

const shortcuts = [
  { label: "此电脑", width: 30, paint: "linear-gradient(160deg, #6fbdf2, #2c8fdc)" },
  { label: "", width: 34, paint: "#a9dcd9" },
  { label: "回收站", width: 36, paint: "linear-gradient(#5fb4ea, #a8d4ee)" },
  { label: "腾讯QQ", linked: true, paint: "linear-gradient(70deg, transparent 20%, #1c2733 21%)" },
  { label: "图吧工具箱", linked: true, paint: "radial-gradient(circle, #c09a58 60%, transparent 62%)" },
  { label: "激活工具", width: 30, paint: "#9ed8d6" },
  { label: "360安全浏览", linked: true, paint: "radial-gradient(circle, #6eb345 55%, #dff0d8 56% 68%, transparent 70%)" },
  { label: "谷歌浏览器", linked: true, paint: "radial-gradient(circle, #2c8a68 64%, transparent 66%)" },
  { label: "Flash插件", width: 30, paint: "#9ed8d6" },
  { label: "录屏文件", width: 30, paint: "#9ed8d6" },
];

const tabs = [
  { title: "购物车 | 炎火云", icon: <DocIcon />, divided: true },
  { title: "余胜军-哔哩哔哩_bilibili", icon: <BiliIcon />, divided: true },
  { title: "购物车 | 炎火云", icon: <ShieldTabIcon />, active: true },
  { title: "实例管理 - 云系统", icon: <VueIcon /> },
];

const bookmarks = [
  { title: "百度翻译-200种语...", icon: <TranslateIcon>译</TranslateIcon> },
  { title: "百度一下，你就知道", icon: <PawIcon /> },
  { title: "智简魔方-首页", icon: <CubeIcon /> },
  { title: "阿里云控制台首页", icon: <AliyunIcon /> },
  { title: "度加创作工具-百度...", icon: <DujiaIcon /> },
  { title: "OIOI-AI人工智能对...", icon: <RingIcon /> },
  { title: "“yun.weigud.cn”国...", icon: <PingIcon /> },
  { title: "管理平台", icon: <DocIcon /> },
  { title: "便宜的域名和虚拟...", icon: <ServerIcon /> },
  { title: "多个地点Ping服务...", icon: <PingIcon /> },
];

const railApps = [
  ["购物", TagIcon],
  ["工具", ToolboxIcon],
  ["搜索", SearchIcon],
  ["游戏", ChessIcon],
  ["Microsoft 365", OfficeIcon],
  ["Outlook", OutlookIcon],
  ["Drop", PlaneIcon],
];

const products = ["订购产品", "云服务器", "独立服务器", "虚拟机", "CDN", "远程电脑|挂机宝"];

const groups = [
  "6月份活动:特惠年付机器",
  "国内电信共享IP服务器",
  "虚拟主机",
  "万元补贴特价区|香港服务器",
  "增值服务",
  "炎火云会员权益",
];

const details = [
  { text: "此为年费特价机器套餐包含：" },
  { text: "国内高性价比服务器" },
  { text: "配置如下：" },
  { text: "E5-2680 v2*2 睿频加速3.6G" },
  { text: "4核心起" },
  { text: "4G原生运行内存" },
  { text: "共享IP" },
  { text: "下行100M起不限速" },
  { text: "限时免费升级30M上行带宽", hot: true },
  { text: "硬盘30G起" },
  { text: "前20名购买赠送永久部分产品7折扣价+年费返现20元站内余额[不可提现]", hot: true },
];

const tasks = [
  { title: "十一种美丽 - ...", icon: <NeteaseLogo /> },
  { title: "微信", icon: <WechatLogo /> },
  { title: "图片查看", icon: <WechatLogo /> },
  { title: "购物车 | 炎火...", icon: <EdgeLogo />, active: true },
  { title: "客户配置 - 炎...", icon: <EdgeLogo /> },
  { title: "WeGame", icon: <WegameLogo /> },
  { title: "Bandicam 20...", icon: <RecordLogo /> },
  { title: "橘子云禁言通...", icon: <CndcLogo /> },
];

const trayApps = [
  ["网易云音乐", <NeteaseLogo size={16} />],
  ["WeGame", <WegameLogo size={16} round />],
  ["网盘", <DriveLogo />],
  ["音量", <SpeakerIcon />],
  ["Bandicam", <RecordLogo size={17} />],
  ["麦克风", <MicIcon />],
  ["ToDesk", <TodeskLogo />],
  ["360浏览器", <Browser360Logo size={16} />],
  ["QQ", <QQLogo size={18} pink />],
  ["微信", <WechatLogo size={17} />],
  ["NVIDIA", <NvidiaLogo size={16} />],
  ["安全卫士", <GuardLogo />],
  ["蓝牙", <BluetoothLogo />],
  ["网络", <NetworkIcon />],
];

/* ---------- sections ---------- */

const DesktopIcons = () => (
  <>
    <ShortcutColumn>
      {shortcuts.map((s, i) => (
        <Shortcut key={i} aria-label={s.label || "文件夹"}>
          <ShortcutArt $paint={s.paint} $width={s.width} $linked={s.linked} />
          {s.label}
        </Shortcut>
      ))}
    </ShortcutColumn>
    <ShortcutRow>
      <RowIcon $cell={152}>
        <NvidiaLogo size={46} />
      </RowIcon>
      <RowIcon $cell={84}>
        <Svg size={46}>
          <circle cx="12" cy="12" r="12" fill="#fdc70c" />
          <path d="M5 10.500l5-1.500M8 6v10M5 14l5-2M12 7h8M13 7c1 5 0 8-3 10M14 11h5l-3 6M20 7l-1 4" stroke="#111" strokeWidth="2" />
        </Svg>
      </RowIcon>
      <RowIcon $cell={71} $top={5}>
        <Svg size={30}>
          <path d="M0 0h14v24H0z" fill="#f4cf7d" />
          <path d="M7 4h13l4 4v16H7z" fill="#f6e3b4" />
          <path d="M14 5l5 3v16h-4z" fill="#e8ecea" />
          <path d="M14 5l3 19" stroke="#9da6a6" />
        </Svg>
      </RowIcon>
      <RowIcon $cell={75} $top={3}>
        <Svg size={38}>
          <path d="M4 0h14l5 5v19H4z" fill="#f4f8fb" />
          <path d="M18 0l5 5h-5z" fill="#c8dced" />
          <path d="M0 6h15v18H0z" fill="#2478dd" />
          <path d="M3 10l2 8 2.500-7L10 18l2-8" stroke="#fff" strokeWidth="2" />
        </Svg>
      </RowIcon>
      <RowIcon $cell={46}>
        <Svg size={44}>
          <defs>
            <linearGradient id="cloud" x1="0" y1="0" x2="1" y2="0">
              <stop offset="0" stopColor="#e93aa2" />
              <stop offset=".5" stopColor="#f33b2f" />
              <stop offset="1" stopColor="#ff9416" />
            </linearGradient>
          </defs>
          <rect width="24" height="24" rx="4" fill="url(#cloud)" />
          <path d="M9 17a5 5 0 1 1 3.500-8.500l6 6M7 12a3 3 0 0 1 5 0l4 5M10 8.500a5.500 5.500 0 1 1 7 8.500" stroke="#fff" strokeWidth="1.500" />
        </Svg>
      </RowIcon>
    </ShortcutRow>
  </>
);

const RecorderWindow = () => (
  <Recorder>
    <RecorderTitle>
      <IconButton aria-label="计划" $color="inherit">
        <Svg size={13}>
          <circle cx="12" cy="12" r="12" fill="currentColor" />
          <path d="M12 4v9h7" stroke="#414a57" strokeWidth="3" />
        </Svg>
      </IconButton>
      <IconButton aria-label="帮助" $color="inherit">
        <Svg size={14} stroke="currentColor" strokeWidth="3.500">
          <path d="M5 7c0-7 14-7 14 0 0 5-7 4-7 10M12 20v4" />
        </Svg>
      </IconButton>
      <IconButton aria-label="缩小窗口" $color="inherit" $width={24}>
        <Svg size={12}>
          <path d="M7 20h9" stroke="currentColor" strokeWidth="4" />
        </Svg>
      </IconButton>
      <IconButton aria-label="最小化" $color="inherit">
        <Svg size={12}>
          <path d="M2 20h20" stroke="currentColor" strokeWidth="4" />
        </Svg>
      </IconButton>
      <IconButton aria-label="关闭" $color="inherit" $width={22}>
        <X size={18} strokeWidth={1.5} />
      </IconButton>
    </RecorderTitle>
    <RecorderBar>
      <TextTool aria-label="文字">T</TextTool>
      <BarRule />
      <PauseButton aria-label="暂停" />
      <StopButton aria-label="停止" />
      <CameraButton aria-label="截图">
        <Svg size={20}>
          <path d="M0 7c0-1.500 1-2.500 2.500-2.500H6L8 2h8l2 2.500h3.500C23 4.500 24 5.500 24 7v12c0 1.500-1 2.500-2.500 2.500h-19C1 21.500 0 20.500 0 19z" fill="#c5c9ce" />
          <circle cx="12" cy="12.500" r="5" stroke="#222930" strokeWidth="2.500" />
          <circle cx="20.500" cy="8.500" r="1.500" fill="#222930" />
        </Svg>
      </CameraButton>
    </RecorderBar>
    <Collapse>
      <ChevronUp size={20} strokeWidth={1.3} />
    </Collapse>
    <RecorderPanel>
      <PanelSection $ruled $height={203} $top={30}>
        <PanelRow>
          <PathInput aria-label="输出文件夹" />
          <PanelButton $width={38}>...</PanelButton>
          <PanelButton $width={70}>打开</PanelButton>
        </PanelRow>
        <PanelSection $top={60} $height={85}>
          <PanelRow>
            <PanelButton $width={110}>高级</PanelButton>
          </PanelRow>
        </PanelSection>
      </PanelSection>
      <PanelSection $ruled $height={90} $top={7}>
        <PanelRow>
          <PanelButton $width={90} $dim aria-label="录像格式" />
          <PanelButton $width={110}>设置</PanelButton>
        </PanelRow>
      </PanelSection>
      <PanelSection $ruled $height={70} $top={7}>
        <PanelRow>
          <PanelButton $width={90} $dim aria-label="图像格式" />
          <PanelButton $width={110}>设置</PanelButton>
        </PanelRow>
      </PanelSection>
    </RecorderPanel>
  </Recorder>
);

const BrowserTabs = () => (
  <TabStrip>
    <StripTools>
      <IconButton aria-label="个人资料" $width={24} $height={24}>
        <ProfileIcon />
      </IconButton>
      <IconButton aria-label="工作区">
        <WorkspacesIcon />
      </IconButton>
      <IconButton aria-label="标签页操作">
        <TabActionsIcon />
      </IconButton>
    </StripTools>
    {tabs.map((tab, i) => (
      <Tab key={i} $active={tab.active} $divided={tab.divided}>
        {tab.icon}
        <TabTitle>{tab.title}</TabTitle>
        <IconButton aria-label="关闭标签页" $width={14}>
          <X size={14} strokeWidth={1.8} />
        </IconButton>
      </Tab>
    ))}
    <NewTab>
      <TabRule />
      <IconButton aria-label="新建标签页">
        <Plus size={20} strokeWidth={1.4} />
      </IconButton>
    </NewTab>
    <WindowButtons>
      <IconButton aria-label="最小化" $width={46} $height={30} $color="#fff">
        <Minus size={14} strokeWidth={1.4} />
      </IconButton>
      <IconButton aria-label="最大化" $width={46} $height={30} $color="#fff">
        <Square size={13} strokeWidth={2} />
      </IconButton>
      <IconButton aria-label="关闭" $width={46} $height={30} $color="#fff">
        <X size={18} strokeWidth={1.4} />
      </IconButton>
    </WindowButtons>
  </TabStrip>
);

const BrowserToolbar = () => (
  <>
    <Toolbar>
      <HistoryButtons>
        <IconButton aria-label="返回" $width={20}>
          <ArrowLeft size={20} strokeWidth={1.5} />
        </IconButton>
        <IconButton aria-label="刷新">
          <RotateCw size={19} strokeWidth={1.5} />
        </IconButton>
      </HistoryButtons>
      <AddressBar>
        <LockIcon />
        <AddressInput aria-label="地址栏" defaultValue="https://mingkj.com/cart" />
        <IconButton type="button" aria-label="大声朗读" $color="#666">
          <ReadAloudIcon />
        </IconButton>
        <IconButton type="button" aria-label="收藏此页" $color="#666" $width={34}>
          <Star size={18} strokeWidth={1.3} />
        </IconButton>
      </AddressBar>
      <ToolbarActions>
        <IconButton aria-label="分屏">
          <SplitIcon />
        </IconButton>
        <IconButton aria-label="收藏夹">
          <FavoritesIcon />
        </IconButton>
        <IconButton aria-label="集锦">
          <CollectionsIcon />
        </IconButton>
        <IconButton aria-label="浏览器概要">
          <HealthIcon />
        </IconButton>
        <IconButton aria-label="设置及其他">
          <Ellipsis size={18} strokeWidth={2} />
        </IconButton>
      </ToolbarActions>
    </Toolbar>
    <Bookmarks>
      {bookmarks.map((b) => (
        <Bookmark key={b.title} href="#">
          {b.icon}
          {b.title}
        </Bookmark>
      ))}
      <OtherBookmarks>
        <IconButton aria-label="更多收藏">
          <ChevronRight size={20} strokeWidth={1.5} />
        </IconButton>
        <Separator />
        <Bookmark href="#">
          <FolderIcon />
          其他收藏夹
        </Bookmark>
      </OtherBookmarks>
    </Bookmarks>
  </>
);

const ShopHeader = () => (
  <SiteHeader>
    <Logo href="#">炎火云</Logo>
    <IconButton aria-label="收起菜单" $width={16}>
      <MenuFoldIcon />
    </IconButton>
    <Overview href="#">
      <MonitorIcon />
      总览
    </Overview>
    <HeaderTools>
      <HeaderButton aria-label="语言" $width={60}>
        <FlagIcon />
      </HeaderButton>
      <HeaderButton aria-label="购物车">
        <CartIcon />
      </HeaderButton>
      <HeaderButton aria-label="消息">
        <BellIcon />
      </HeaderButton>
      <Account>
        <Avatar>1</Avatar>
        1367072251
        <ChevronDown size={8} strokeWidth={3} />
      </Account>
    </HeaderTools>
  </SiteHeader>
);

const Navigation = () => (
  <SideNav>
    <NavItem href="#">
      <HomeIcon />
      <NavLabel>用户中心</NavLabel>
    </NavItem>
    <NavItem href="#">
      <BellIcon tilt size={17} />
      <NavLabel>推介计划</NavLabel>
    </NavItem>
    <NavItem href="#" $open>
      <GridIcon />
      <NavLabel>产品与服务</NavLabel>
      <ChevronUp size={12} strokeWidth={3} />
    </NavItem>
    {products.map((name, i) => (
      <SubItem key={name} href="#" $active={i === 0}>
        {name}
      </SubItem>
    ))}
    <NavItem href="#">
      <UserIcon />
      <NavLabel>账户管理</NavLabel>
      <ChevronDown size={12} strokeWidth={3} />
    </NavItem>
    <NavItem href="#">
      <MoneyIcon />
      <NavLabel>财务管理</NavLabel>
      <ChevronDown size={12} strokeWidth={3} />
    </NavItem>
    <NavItem href="#">
      <NewsIcon />
      <NavLabel>技术支持</NavLabel>
      <ChevronDown size={12} strokeWidth={3} />
    </NavItem>
  </SideNav>
);

const Shop = () => (
  <Content>
    <CardTail />
    <Card>
      选择产品
      <GroupPicker>
        {groups.map((name, i) => (
          <GroupButton key={name} $active={i === 0}>
            {name}
          </GroupButton>
        ))}
      </GroupPicker>
    </Card>
    <Slogan>商品标语</Slogan>
    <ProductCard>
      <Stock>
        库存：<span>19</span>
      </Stock>
      <ProductTitle>6月份羊毛活动:特惠年付机器 限量20台！</ProductTitle>
      <Price>¥ 69.00 元 / 半年</Price>
      <Details>
        <Detail>
          炎火出品，必属精品！
          <br />
          地区 镇江电信机房
        </Detail>
        {details.map((d) => (
          <Detail key={d.text} $hot={d.hot}>
            {d.text}
          </Detail>
        ))}
      </Details>
    </ProductCard>
  </Content>
);

const Browser = () => (
  <BrowserWindow>
    <BrowserTabs />
    <BrowserBody>
      <BrowserMain>
        <BrowserToolbar />
        <PageFrame>
          <Site>
            <ShopHeader />
            <SiteBody>
              <Navigation />
              <Shop />
            </SiteBody>
          </Site>
          <ScrollTrack>
            <ScrollArrow />
            <ScrollThumb />
          </ScrollTrack>
        </PageFrame>
      </BrowserMain>
      <EdgeRail>
        <IconButton aria-label="侧边栏">
          <PanelIcon />
        </IconButton>
        {railApps.map(([name, Icon]) => (
          <IconButton key={name} aria-label={name}>
            <Icon />
          </IconButton>
        ))}
        <RailRule />
        <AddApp aria-label="自定义">
          <Plus size={18} strokeWidth={1.5} />
          <RedDot />
        </AddApp>
        <RailBottom>
          <IconButton aria-label="屏幕截图">
            <ShotIcon />
          </IconButton>
          <RailRule />
          <IconButton aria-label="设置">
            <Settings size={18} strokeWidth={1.5} />
          </IconButton>
        </RailBottom>
      </EdgeRail>
    </BrowserBody>
  </BrowserWindow>
);

const SystemTaskbar = () => (
  <Taskbar>
    <PinnedButton aria-label="开始">
      <WindowsLogo />
    </PinnedButton>
    <PinnedButton aria-label="Chrome">
      <ChromeLogo />
    </PinnedButton>
    <PinnedButton aria-label="文件资源管理器">
      <ExplorerLogo />
    </PinnedButton>
    <TaskList>
      <TaskButton>
        <Browser360Logo />
        客户配置 - 炎...
      </TaskButton>
    </TaskList>
    <PinnedButton aria-label="QQ">
      <QQLogo />
    </PinnedButton>
    <PinnedButton aria-label="剪映">
      <CapcutLogo />
    </PinnedButton>
    <TaskList>
      {tasks.map((t, i) => (
        <TaskButton key={i} $active={t.active}>
          {t.icon}
          {t.title}
        </TaskButton>
      ))}
    </TaskList>
    <Tray>
      {trayApps.map(([name, icon]) => (
        <TrayButton key={name} aria-label={name}>
          {icon}
        </TrayButton>
      ))}
      <InputMode>英</InputMode>
      <Clock>
        <span>22:35</span>
        <span>2024/6/20</span>
      </Clock>
      <Notice aria-label="通知">
        <NoticeIcon />
      </Notice>
      <ShowDesktop aria-label="显示桌面" />
    </Tray>
  </Taskbar>
);

export default function App() {
  return (
    <>
      <GlobalStyle />
      <Desktop>
        <Workspace>
          <DesktopIcons />
          <RecorderWindow />
          <Browser />
        </Workspace>
        <SystemTaskbar />
      </Desktop>
    </>
  );
}
